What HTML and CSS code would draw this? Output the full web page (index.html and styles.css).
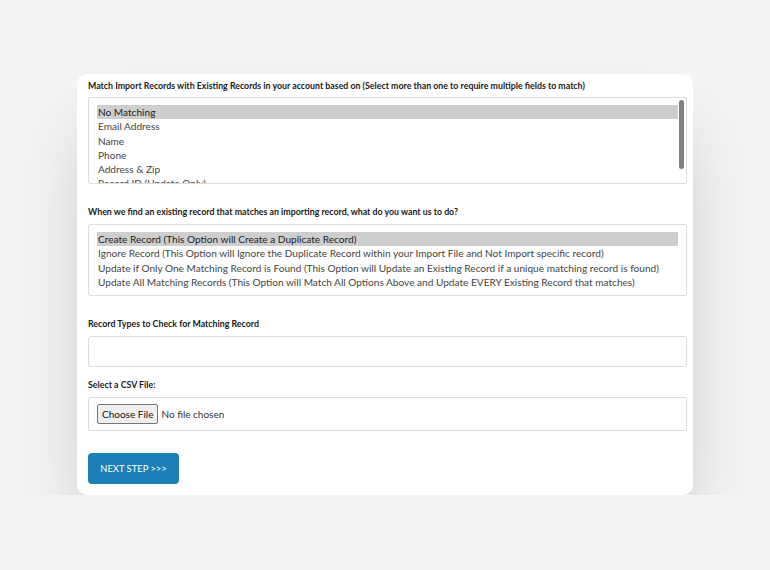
FILE: index.html
```html
<!DOCTYPE html>
<html>
<head>
<meta charset="utf-8">
<link rel="stylesheet" href="styles.css">
</head>
<body>
<div class="card">
  <div class="field">
    <div class="label">Match Import Records with Existing Records in your account based on (Select more than one to require multiple fields to match)</div>
    <div class="listbox listbox-tall">
      <div class="options">
        <div class="opt selected">No Matching</div>
        <div class="opt">Email Address</div>
        <div class="opt">Name</div>
        <div class="opt">Phone</div>
        <div class="opt">Address &amp; Zip</div>
        <div class="opt">Record ID (Update Only)</div>
      </div>
      <div class="scrollbar"></div>
    </div>
  </div>
  <div class="field">
    <div class="label">When we find an existing record that matches an importing record, what do you want us to do?</div>
    <div class="listbox listbox-short">
      <div class="options">
        <div class="opt selected">Create Record (This Option will Create a Duplicate Record)</div>
        <div class="opt">Ignore Record (This Option will Ignore the Duplicate Record within your Import File and Not Import specific record)</div>
        <div class="opt">Update if Only One Matching Record is Found (This Option will Update an Existing Record if a unique matching record is found)</div>
        <div class="opt">Update All Matching Records (This Option will Match All Options Above and Update EVERY Existing Record that matches)</div>
      </div>
    </div>
  </div>
  <div class="field field-tight">
    <div class="label">Record Types to Check for Matching Record</div>
    <div class="textbox"></div>
  </div>
  <div class="field">
    <div class="label">Select a CSV File:</div>
    <div class="filebox">
      <button class="choose" type="button">Choose File</button>
      <span class="nofile">No file chosen</span>
    </div>
  </div>
  <button class="next" type="button">NEXT STEP &gt;&gt;&gt;</button>
</div>
</body>
</html>
```
FILE: styles.css
```css
* { box-sizing: border-box; }
body {
  margin: 0;
  background: #f4f4f4;
  font-family: "Source Sans Pro", Lato, "Liberation Sans", sans-serif;
  color: #444;
}
.card {
  margin: 74px 0 0 77px;
  width: 616px;
  height: 421px;
  background: #fff;
  border-radius: 10px;
  padding: 6px 6px 11px 11px;
  box-shadow: 0 45px 70px -15px rgba(0,0,0,0.22);
}
.field { margin-bottom: 22px; }
.field-tight { margin-bottom: 12px; }
.label {
  font-size: 8.8px;
  line-height: 12px;
  font-weight: 700;
  color: #1a1a1a;
  margin-bottom: 5px;
  white-space: nowrap;
}
.field + .field .label { margin-bottom: 6px; }
.listbox {
  position: relative;
  border: 1px solid #dcdcdc;
  border-radius: 2px;
  overflow: hidden;
  padding: 7px 8px 0 8px;
}
.listbox-tall { height: 87px; }
.listbox-short { height: 72px; }
.opt {
  font-size: 10.1px;
  line-height: 14.3px;
  height: 14.3px;
  white-space: nowrap;
  color: #444;
  padding-left: 1px;
}
.opt.selected { background: #cecece; color: #222; }
.scrollbar {
  position: absolute;
  right: 2px;
  top: 2px;
  width: 5px;
  height: 69px;
  border-radius: 3px;
  background: #808080;
}
.textbox {
  height: 31px;
  border: 1px solid #dcdcdc;
  border-radius: 3px;
}
.filebox {
  height: 34px;
  border: 1px solid #dcdcdc;
  border-radius: 2px;
  display: flex;
  align-items: center;
  padding-left: 8px;
  gap: 3px;
}
.choose {
  font-family: inherit;
  font-size: 10px;
  height: 20px;
  padding: 0 4px;
  background: #efefef;
  border: 1px solid #767676;
  border-radius: 2px;
  color: #111;
}
.nofile { font-size: 10px; color: #333; }
.next {
  display: block;
  font-family: inherit;
  width: 91px;
  height: 31px;
  border: 0;
  border-radius: 4px;
  background: #1a80b6;
  color: #fff;
  font-size: 9.4px;
  padding: 0;
}
```
